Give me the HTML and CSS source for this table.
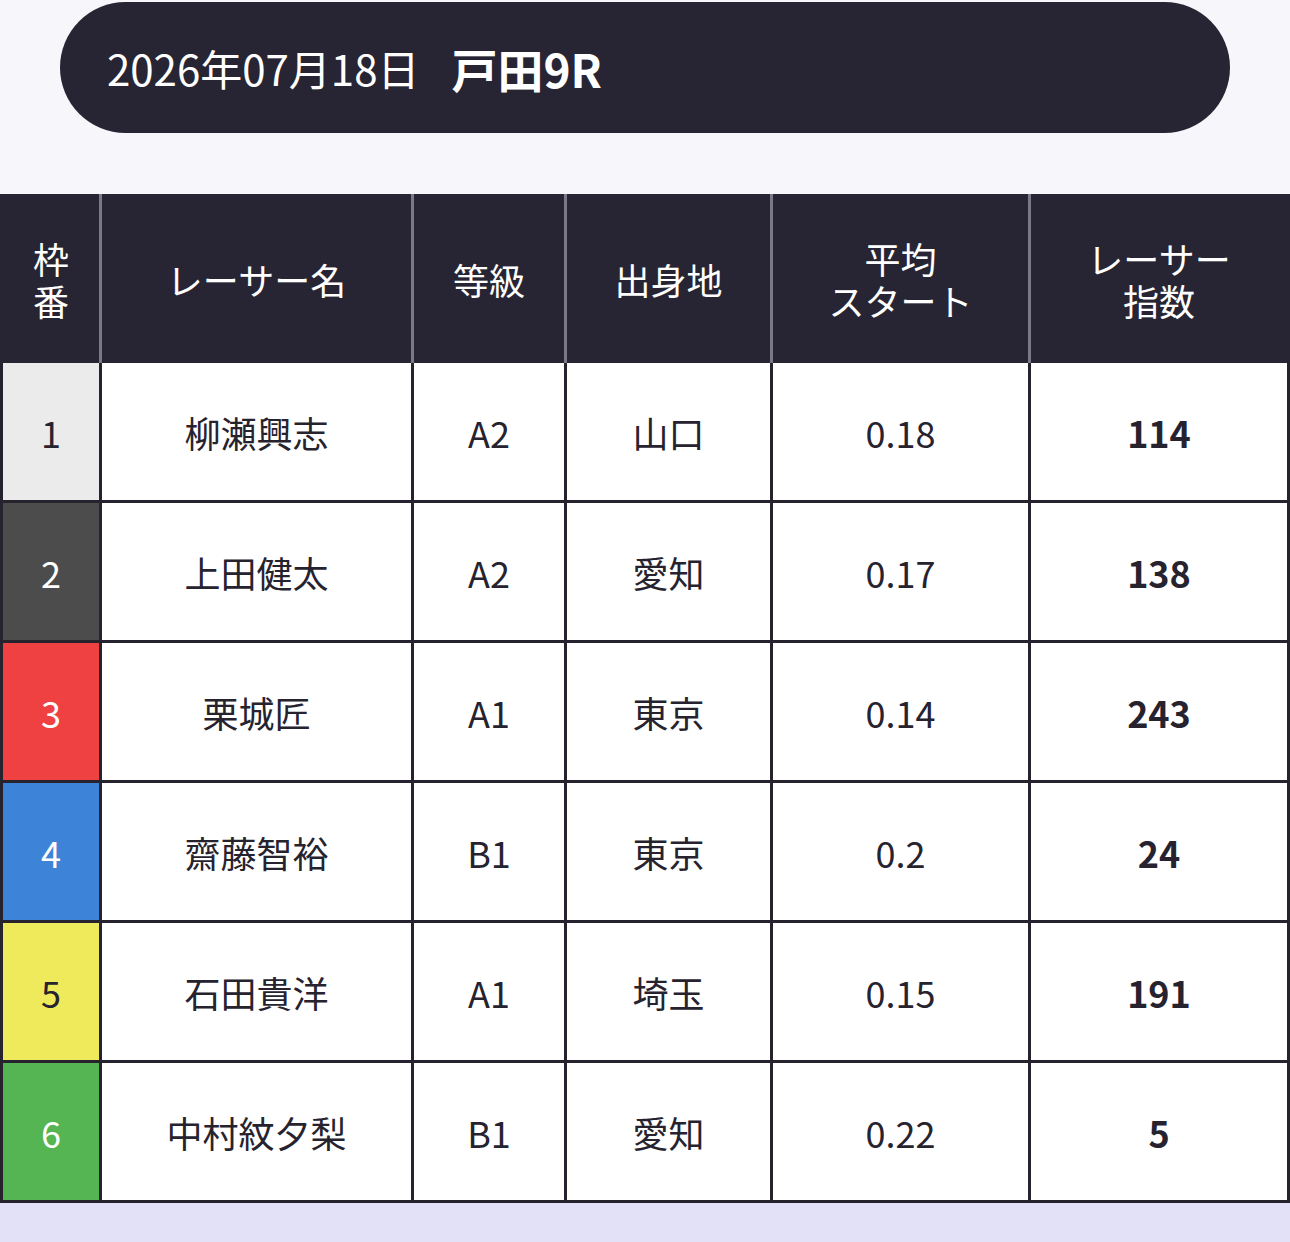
FILE: index.html
```html
<!DOCTYPE html>
<html lang="ja">
<head>
<meta charset="utf-8">
<title>戸田9R</title>
<link rel="stylesheet" href="styles.css">
</head>
<body>
<div class="top">
  <div class="race-pill">
    <span class="date">2026年07月18日</span>
    <span class="race">戸田9R</span>
  </div>
</div>
<div class="racer-table">
  <div class="cell head first">枠<br>番</div>
  <div class="cell head">レーサー名</div>
  <div class="cell head">等級</div>
  <div class="cell head">出身地</div>
  <div class="cell head">平均<br>スタート</div>
  <div class="cell head last">レーサー<br>指数</div>

  <div class="cell first waku w1">1</div>
  <div class="cell">柳瀬興志</div>
  <div class="cell">A2</div>
  <div class="cell">山口</div>
  <div class="cell">0.18</div>
  <div class="cell score">114</div>

  <div class="cell first waku w2">2</div>
  <div class="cell">上田健太</div>
  <div class="cell">A2</div>
  <div class="cell">愛知</div>
  <div class="cell">0.17</div>
  <div class="cell score">138</div>

  <div class="cell first waku w3">3</div>
  <div class="cell">栗城匠</div>
  <div class="cell">A1</div>
  <div class="cell">東京</div>
  <div class="cell">0.14</div>
  <div class="cell score">243</div>

  <div class="cell first waku w4">4</div>
  <div class="cell">齋藤智裕</div>
  <div class="cell">B1</div>
  <div class="cell">東京</div>
  <div class="cell">0.2</div>
  <div class="cell score">24</div>

  <div class="cell first waku w5">5</div>
  <div class="cell">石田貴洋</div>
  <div class="cell">A1</div>
  <div class="cell">埼玉</div>
  <div class="cell">0.15</div>
  <div class="cell score">191</div>

  <div class="cell first waku w6">6</div>
  <div class="cell">中村紋夕梨</div>
  <div class="cell">B1</div>
  <div class="cell">愛知</div>
  <div class="cell">0.22</div>
  <div class="cell score">5</div>
</div>
</body>
</html>
```
FILE: styles.css
```css
* { box-sizing: border-box; }
html, body {
  margin: 0;
  padding: 0;
}
body {
  background: #e3e1f8;
  font-family: "Noto Sans CJK JP", "Noto Sans", sans-serif;
  color: #26232f;
}
.top {
  background: #f6f6fb;
  padding: 2px 60px 61px 60px;
}
.race-pill {
  height: 131px;
  background: #272533;
  border-radius: 66px;
  display: flex;
  align-items: center;
  padding: 0 48px 0 47px;
  color: #ffffff;
  gap: 32px;
}
.date {
  font-size: 42px;
  font-weight: 400;
}
.race {
  font-size: 46px;
  font-weight: 700;
}
.racer-table {
  display: grid;
  grid-template-columns: 102px 312px 153px 206px 258px 259px;
  grid-template-rows: 169px repeat(6, 140px);
  background: #ffffff;
}
.cell {
  display: flex;
  align-items: center;
  justify-content: center;
  text-align: center;
  font-size: 36px;
  line-height: 42px;
  border-right: 3px solid #26232f;
  border-bottom: 3px solid #26232f;
  background: #ffffff;
}
.cell.first {
  border-left: 3px solid #26232f;
}
.head {
  background: #272533;
  color: #ffffff;
  border-bottom: none;
  border-right-color: #7b7987;
}
.head.first {
  border-left-color: #272533;
}
.head.last {
  border-right-color: #272533;
}
.score {
  font-weight: 700;
}
.waku { color: #ffffff; }
.w1 { background: #ebebeb; color: #26232f; }
.w2 { background: #4c4c4c; }
.w3 { background: #ef4141; }
.w4 { background: #3d84d8; }
.w5 { background: #eeea5c; color: #26232f; }
.w6 { background: #54b552; }
```
